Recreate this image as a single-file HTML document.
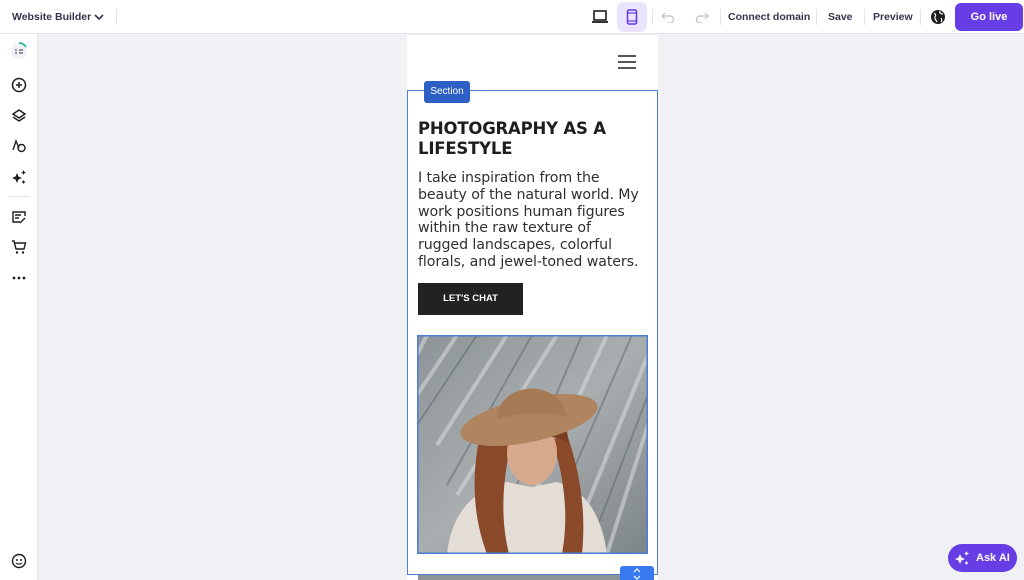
<!DOCTYPE html>
<html><head><meta charset="utf-8"><style>
*{margin:0;padding:0;box-sizing:border-box}
body{width:1024px;height:580px;overflow:hidden;background:#f0f1f5;font-family:"Liberation Sans",sans-serif;position:relative;color:#1d1e20}
.top{position:absolute;left:0;top:0;width:1024px;height:34px;background:#fff;border-bottom:1px solid #e3e4e8}
.side{position:absolute;left:0;top:34px;width:38px;height:546px;background:#fff;border-right:1px solid #e3e4e8}
.t{position:absolute;font-size:10.5px;font-weight:bold;color:#36344d;top:11px;white-space:nowrap}
.sep{position:absolute;top:9px;width:1px;height:16px;background:#e3e4e8}
.frame{position:absolute;left:407px;top:35px;width:251px;height:545px;background:#fff}
.sec{position:absolute;left:407px;top:90px;width:251px;height:485px;border:1.5px solid #4a7fd6}
svg.i{position:absolute}
</style></head><body>
<div class="top">
<div class="t" style="left:12px">Website Builder</div>
<svg class="i" style="left:94px;top:13px" width="10" height="8" viewBox="0 0 10 8"><path d="M1 2l4 4 4-4" fill="none" stroke="#36344d" stroke-width="1.6"/></svg>
<div class="sep" style="left:116px"></div>
<svg class="i" style="left:591px;top:9px" width="18" height="16" viewBox="0 0 18 16"><rect x="3" y="2" width="12" height="9" fill="none" stroke="#1d1e20" stroke-width="1.6"/><path d="M1 13h16" stroke="#1d1e20" stroke-width="1.8"/></svg>
<div style="position:absolute;left:617px;top:2px;width:30px;height:30px;border-radius:6px;background:#ebe4ff"></div>
<svg class="i" style="left:626px;top:9px" width="12" height="16" viewBox="0 0 12 16"><rect x="1.5" y="1" width="9" height="14" rx="1.5" fill="none" stroke="#673de6" stroke-width="1.6"/><path d="M1.5 12h9M1.5 4h9" stroke="#673de6" stroke-width="1.2"/></svg>
<div class="sep" style="left:652px"></div>
<svg class="i" style="left:661px;top:11px" width="14" height="12" viewBox="0 0 14 12"><path d="M4 2L1 5l3 3M1 5h8a3.5 3.5 0 010 7H6" fill="none" stroke="#c7c8cc" stroke-width="1.4"/></svg>
<svg class="i" style="left:695px;top:11px" width="14" height="12" viewBox="0 0 14 12"><path d="M10 2l3 3-3 3M13 5H5a3.5 3.5 0 000 7h3" fill="none" stroke="#c7c8cc" stroke-width="1.4"/></svg>
<div class="sep" style="left:720px"></div>
<div class="t" style="left:728px">Connect domain</div>
<div class="sep" style="left:816px"></div>
<div class="t" style="left:828px">Save</div>
<div class="sep" style="left:864px"></div>
<div class="t" style="left:873px">Preview</div>
<div class="sep" style="left:920px"></div>
<svg class="i" style="left:930px;top:9px" width="16" height="16" viewBox="0 0 16 16"><circle cx="8" cy="8" r="7" fill="#1d1e20"/><path d="M4 4c2 1 2 3 1 4s1 3 2 5M10 2c-1 2 1 3 3 3M11 9c1 1 1 3 0 4" stroke="#fff" stroke-width="1.2" fill="none"/></svg>
<div style="position:absolute;left:955px;top:3px;width:68px;height:28px;border-radius:6px;background:#673de6;color:#fff;font-size:11px;font-weight:bold;text-align:center;line-height:28px">Go live</div>
</div>
<div class="side">
<svg class="i" style="left:10px;top:8px" width="18" height="18" viewBox="0 0 18 18"><circle cx="9" cy="9" r="8" fill="#f0f1f5"/><path d="M9 1a8 8 0 017 4" stroke="#00b090" stroke-width="1.6" fill="none"/><path d="M5 8h2M9 8h4M5 11h2M9 11h4" stroke="#36344d" stroke-width="1"/></svg>
<svg class="i" style="left:11px;top:43px" width="16" height="16" viewBox="0 0 16 16"><circle cx="8" cy="8" r="6.5" fill="none" stroke="#1d1e20" stroke-width="1.5"/><path d="M8 5v6M5 8h6" stroke="#1d1e20" stroke-width="1.5"/></svg>
<svg class="i" style="left:11px;top:74px" width="16" height="16" viewBox="0 0 16 16"><path d="M8 2l6 4-6 4-6-4z M2 9l6 4 6-4" fill="none" stroke="#1d1e20" stroke-width="1.5"/></svg>
<svg class="i" style="left:11px;top:104px" width="16" height="16" viewBox="0 0 16 16"><path d="M2 12L5 3l3 7" fill="none" stroke="#1d1e20" stroke-width="1.4"/><circle cx="10.5" cy="10" r="3.5" fill="none" stroke="#1d1e20" stroke-width="1.4"/></svg>
<svg class="i" style="left:11px;top:135px" width="16" height="16" viewBox="0 0 16 16"><path d="M6 4l1.5 3.5L11 9l-3.5 1.5L6 14l-1.5-3.5L1 9l3.5-1.5z M12.5 1l.8 1.7 1.7.8-1.7.8-.8 1.7-.8-1.7-1.7-.8 1.7-.8z M12.5 11l.7 1.3 1.3.7-1.3.7-.7 1.3-.7-1.3-1.3-.7 1.3-.7z" fill="#1d1e20"/></svg>
<div style="position:absolute;left:8px;top:162px;width:22px;height:1px;background:#e3e4e8"></div>
<svg class="i" style="left:11px;top:175px" width="16" height="16" viewBox="0 0 16 16"><path d="M9 13H2V3h12v4M4 6h6M4 9h4M9 14l5-5" fill="none" stroke="#1d1e20" stroke-width="1.4"/></svg>
<svg class="i" style="left:11px;top:205px" width="16" height="16" viewBox="0 0 16 16"><path d="M1 2h2l2 8h8l1.5-6H4" fill="none" stroke="#1d1e20" stroke-width="1.4"/><circle cx="6" cy="13.5" r="1.2" fill="#1d1e20"/><circle cx="12" cy="13.5" r="1.2" fill="#1d1e20"/></svg>
<svg class="i" style="left:12px;top:242px" width="14" height="4" viewBox="0 0 14 4"><circle cx="2" cy="2" r="1.4" fill="#1d1e20"/><circle cx="7" cy="2" r="1.4" fill="#1d1e20"/><circle cx="12" cy="2" r="1.4" fill="#1d1e20"/></svg>
<svg class="i" style="left:11px;top:519px" width="16" height="16" viewBox="0 0 16 16"><circle cx="8" cy="8" r="6.5" fill="none" stroke="#1d1e20" stroke-width="1.4"/><circle cx="6" cy="7" r="1" fill="#1d1e20"/><circle cx="10" cy="7" r="1" fill="#1d1e20"/><path d="M5 10c1.5 1.5 4.5 1.5 6 0" stroke="#1d1e20" stroke-width="1.2" fill="none"/></svg>
</div>
<div class="frame">
<svg class="i" style="left:211px;top:20px" width="18" height="14" viewBox="0 0 18 14"><path d="M0 1h18M0 7h18M0 13h18" stroke="#1d1e20" stroke-width="1.6"/></svg>
<div style="position:absolute;left:11px;top:84px;font-family:'DejaVu Sans',sans-serif;font-weight:bold;font-size:16.5px;line-height:20px;color:#1d1e20;width:240px;letter-spacing:-0.2px">PHOTOGRAPHY AS A<br>LIFESTYLE</div>
<div style="position:absolute;left:11px;top:135px;font-family:'DejaVu Sans',sans-serif;font-size:14.2px;line-height:16.8px;color:#2f2f2f;width:250px;white-space:nowrap;letter-spacing:-0.1px">I take inspiration from the<br>beauty of the natural world. My<br>work positions human figures<br>within the raw texture of<br>rugged landscapes, colorful<br>florals, and jewel-toned waters.</div>
<div style="position:absolute;left:11px;top:248px;width:105px;height:32px;background:#222;color:#fff;font-size:9.5px;font-weight:bold;text-align:center;line-height:32px">LET'S CHAT</div>
<svg class="i" style="left:10px;top:300px" width="231" height="219" viewBox="0 0 231 219">
<defs><linearGradient id="m" x1="0" y1="0" x2="1" y2="1"><stop offset="0" stop-color="#8d9497"/><stop offset=".5" stop-color="#a9aeb0"/><stop offset="1" stop-color="#7d8487"/></linearGradient></defs>
<rect width="231" height="219" fill="url(#m)"/>
<g stroke="#d5d8d9" stroke-width="4" opacity=".6"><path d="M40 0L0 60M90 0L20 110M140 0L40 160M190 0L90 219M231 20L150 219M231 90L190 219M10 0L0 20"/></g>
<g stroke="#5f676b" stroke-width="2" opacity=".5"><path d="M60 0L0 90M115 0L30 150M165 0L70 219M215 0L120 219M231 60L170 219"/></g>
<path d="M30 219c5-45 30-65 60-72l25 5 25-5c30 8 45 35 50 72z" fill="#e3ddd6"/>
<path d="M62 105c-8 40-5 80 8 114h22c-10-40-5-80 2-110zM135 105c10 30 18 70 10 114h20c5-50-5-90-15-120z" fill="#8a4a2a"/>
<ellipse cx="115" cy="118" rx="25" ry="32" fill="#d9a98e"/>
<path d="M88 110c-5-15 10-28 30-30s35 10 33 28c-15-10-40-8-63 2z" fill="#7a3f22"/>
<ellipse cx="112" cy="85" rx="70" ry="22" transform="rotate(-12 112 85)" fill="#b0845f"/>
<path d="M80 84c0-32 48-42 66-14l4 12c-22-5-48-4-70 2z" fill="#a67a55"/>
<rect x="0.75" y="0.75" width="229.5" height="217.5" fill="none" stroke="#4a7fd6" stroke-width="1.5"/>
</svg>
<div style="position:absolute;left:11px;top:539px;width:229px;height:6px;background:#8d9497"></div>
</div>
<div class="sec"></div>
<div style="position:absolute;left:424px;top:81px;width:46px;height:22px;border-radius:3px;background:#2e5fc4;color:#fff;font-size:10px;text-align:center;line-height:22px">Section</div>
<div style="position:absolute;left:620px;top:566px;width:34px;height:14px;border-radius:3px 3px 0 0;background:#3a7af0"></div>
<svg class="i" style="left:632px;top:568px" width="10" height="12" viewBox="0 0 10 12"><path d="M2 4l3-3 3 3M2 8l3 3 3-3" stroke="#fff" stroke-width="1.2" fill="none"/></svg>
<div style="position:absolute;left:948px;top:544px;width:69px;height:28px;border-radius:14px;background:#673de6;color:#fff;font-size:11px;font-weight:bold;line-height:28px;padding-left:28px">Ask AI</div>
<svg class="i" style="left:954px;top:550px" width="16" height="16" viewBox="0 0 16 16"><path d="M6 4l1.5 3.5L11 9l-3.5 1.5L6 14l-1.5-3.5L1 9l3.5-1.5z M12.5 1l.8 1.7 1.7.8-1.7.8-.8 1.7-.8-1.7-1.7-.8 1.7-.8z M12.5 11l.7 1.3 1.3.7-1.3.7-.7 1.3-.7-1.3-1.3-.7 1.3-.7z" fill="#fff"/></svg>
</body></html>
